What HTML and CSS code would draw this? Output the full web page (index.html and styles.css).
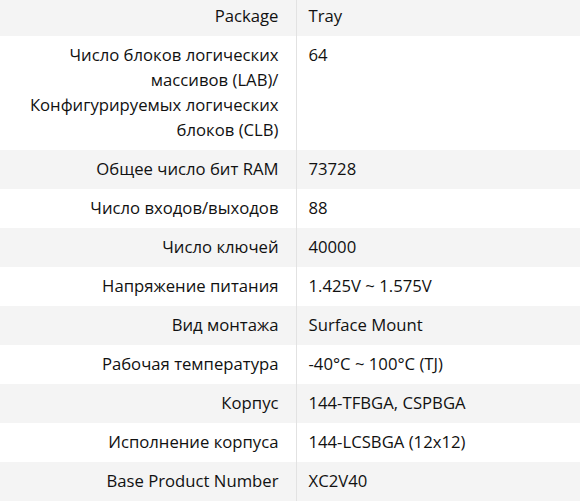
FILE: index.html
```html
<!DOCTYPE html>
<html lang="ru">
<head>
<meta charset="utf-8">
<link rel="stylesheet" href="styles.css">
</head>
<body>
<table class="specs">
  <tbody>
    <tr><th>Package</th><td>Tray</td></tr>
    <tr><th>Число блоков логических массивов (LAB)/ Конфигурируемых логических блоков (CLB)</th><td>64</td></tr>
    <tr><th>Общее число бит RAM</th><td>73728</td></tr>
    <tr><th>Число входов/выходов</th><td>88</td></tr>
    <tr><th>Число ключей</th><td>40000</td></tr>
    <tr><th>Напряжение питания</th><td>1.425V ~ 1.575V</td></tr>
    <tr><th>Вид монтажа</th><td>Surface Mount</td></tr>
    <tr><th>Рабочая температура</th><td>-40°C ~ 100°C (TJ)</td></tr>
    <tr><th>Корпус</th><td>144-TFBGA, CSPBGA</td></tr>
    <tr><th>Исполнение корпуса</th><td>144-LCSBGA (12x12)</td></tr>
    <tr><th>Base Product Number</th><td>XC2V40</td></tr>
  </tbody>
</table>
</body>
</html>
```
FILE: styles.css
```css
html, body {
  margin: 0;
  padding: 0;
  background: #ffffff;
}
body {
  font-family: "Open Sans", "Noto Sans", sans-serif;
  font-size: 16.7px;
  line-height: 25px;
  color: #111111;
}
.specs {
  width: 580px;
  border-collapse: collapse;
  margin-top: -3px;
  table-layout: fixed;
}
.specs tr:nth-child(odd) {
  background: #f4f4f4;
}
.specs th {
  width: 296px;
  box-sizing: border-box;
  text-align: right;
  font-weight: normal;
  vertical-align: top;
  padding: 6px 17px 8px 14px;
  border-right: 1px solid #e2e2e2;
}
.specs td {
  text-align: left;
  vertical-align: top;
  padding: 6px 12px 8px;
}
```
